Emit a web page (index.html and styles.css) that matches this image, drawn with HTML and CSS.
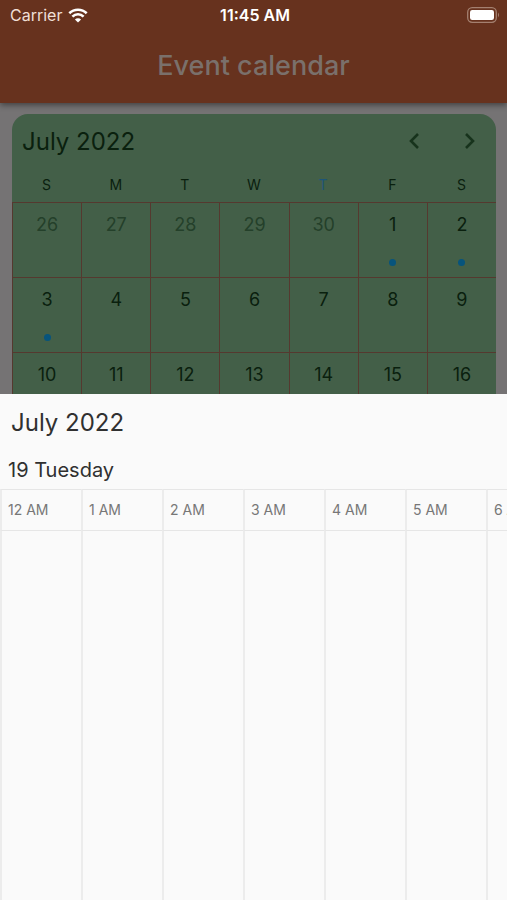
FILE: index.html
```html
<!DOCTYPE html>
<html lang="en">
<head>
<meta charset="utf-8">
<meta name="viewport" content="width=device-width, initial-scale=1">
<title>Event calendar</title>
<link rel="stylesheet" href="styles.css">
</head>
<body>
<div class="screen">
  <div class="backdrop">
    <header class="app-bar">
      <div class="status-bar">
        <div class="carrier">
          <span>Carrier</span>
          <svg class="wifi" viewBox="0 0 20 15" aria-hidden="true">
            <path d="M1.300 5.200A12.600 12.600 0 0 1 18.700 5.200" />
            <path d="M4.400 8.600A8 8 0 0 1 15.600 8.600" />
            <path class="wifi-dot" d="M10 14.600L6.900 11.500A4.400 4.400 0 0 1 13.100 11.500Z" />
          </svg>
        </div>
        <time class="clock">11:45 AM</time>
        <svg class="battery" viewBox="0 0 33 16" aria-hidden="true">
          <rect class="battery-case" x="0.700" y="0.700" width="28.600" height="14.600" rx="4.500" />
          <rect class="battery-level" x="3" y="3" width="24" height="10" rx="2.200" />
          <path class="battery-tip" d="M31 5.600Q33 8 31 10.400Z" />
        </svg>
      </div>
      <h1 class="title">Event calendar</h1>
    </header>
    <main class="month-card">
      <div class="month-head">
        <h2 class="month-name">July 2022</h2>
        <button class="arrow" type="button" aria-label="Previous month">
          <svg viewBox="0 0 24 24" aria-hidden="true"><path d="M15 5L8 12L15 19" /></svg>
        </button>
        <button class="arrow" type="button" aria-label="Next month">
          <svg viewBox="0 0 24 24" aria-hidden="true"><path d="M9 5L16 12L9 19" /></svg>
        </button>
      </div>
      <table class="month">
        <thead>
          <tr><th>S</th><th>M</th><th>T</th><th>W</th><th class="today">T</th><th>F</th><th>S</th></tr>
        </thead>
        <tbody>
          <tr><td class="other">26</td><td class="other">27</td><td class="other">28</td><td class="other">29</td><td class="other">30</td><td class="event">1</td><td class="event">2</td></tr>
          <tr><td class="event">3</td><td>4</td><td>5</td><td>6</td><td>7</td><td>8</td><td>9</td></tr>
          <tr><td>10</td><td>11</td><td>12</td><td>13</td><td>14</td><td>15</td><td>16</td></tr>
        </tbody>
      </table>
    </main>
  </div>
  <section class="sheet">
    <h2 class="sheet-month">July 2022</h2>
    <h3 class="sheet-day">19 Tuesday</h3>
    <div class="timeline">
      <table class="hours">
        <thead>
          <tr><th>12 AM</th><th>1 AM</th><th>2 AM</th><th>3 AM</th><th>4 AM</th><th>5 AM</th><th>6 AM</th></tr>
        </thead>
        <tbody>
          <tr><td></td><td></td><td></td><td></td><td></td><td></td><td></td></tr>
        </tbody>
      </table>
    </div>
  </section>
</div>
</body>
</html>
```
FILE: styles.css
```css
* {
  box-sizing: border-box;
}

body {
  margin: 0;
  font-family: Inter, "Liberation Sans", sans-serif;
  background: #fafafa;
}

h1, h2, h3 {
  margin: 0;
  font-weight: 400;
}

.screen {
  display: grid;
  grid-template-columns: minmax(0, 1fr);
  grid-template-rows: minmax(0, 7fr) minmax(0, 9fr);
  height: 100vh;
  overflow: hidden;
}

.backdrop {
  overflow: hidden;
  background: #757374;
}

.app-bar {
  height: 103px;
  background: #67321e;
  box-shadow: 0 2px 6px rgba(0, 0, 0, 0.45);
}

.status-bar {
  display: grid;
  grid-template-columns: 1fr auto 1fr;
  align-items: center;
  height: 30px;
  padding: 0 7px 0 10px;
  font-size: 16px;
  line-height: 30px;
  color: #f0dfd6;
}

.carrier {
  display: flex;
  align-items: center;
  gap: 6px;
}

.wifi {
  width: 20px;
  height: 15px;
  fill: none;
  stroke: #fff;
  stroke-width: 2.600;
}

.wifi .wifi-dot {
  fill: #fff;
  stroke: none;
}

.clock {
  font-weight: 600;
  color: #fff;
}

.battery {
  justify-self: end;
  width: 33px;
  height: 16px;
}

.battery-case {
  fill: none;
  stroke: #a48070;
  stroke-width: 1.300;
}

.battery-level {
  fill: #fff;
}

.battery-tip {
  fill: #a48070;
}

.title {
  padding-top: 18px;
  font-size: 27px;
  line-height: 36px;
  font-weight: 500;
  text-align: center;
  color: #7a706b;
}

.month-card {
  margin: 11px 11px 0 12px;
  overflow: hidden;
  border-radius: 16px;
  background: #435f48;
  color: #0a200e;
}

.month-head {
  display: flex;
  align-items: center;
  height: 54px;
  padding-left: 10px;
}

.month-name {
  flex: 1;
  font-size: 24px;
}

.arrow {
  display: grid;
  place-items: center;
  width: 54px;
  height: 54px;
  padding: 0;
  border: 0;
  background: none;
}

.arrow svg {
  width: 24px;
  height: 24px;
  fill: none;
  stroke: #17331c;
  stroke-width: 2.600;
}

.month {
  width: 100%;
  table-layout: fixed;
  border-collapse: separate;
  border-spacing: 0;
}

.month th {
  height: 34px;
  padding: 0 0 2px;
  font-size: 14px;
  font-weight: 400;
}

.month .today {
  color: #1d5578;
}

.month td {
  height: 75px;
  padding: 11px 0 0;
  border-top: 1px solid #55392f;
  border-left: 1px solid #55392f;
  font-size: 18px;
  line-height: 22px;
  text-align: center;
  vertical-align: top;
}

.month .other {
  color: #24402a;
}

.event::after {
  content: "";
  display: block;
  width: 7px;
  height: 7px;
  margin: 23px auto 0;
  border-radius: 50%;
  background: #07547c;
}

.sheet {
  display: flex;
  flex-direction: column;
  background: #fafafa;
  color: #303030;
}

.sheet-month {
  padding-left: 11px;
  font-size: 24px;
  line-height: 57px;
}

.sheet-day {
  padding-left: 8px;
  font-size: 20px;
  line-height: 38px;
}

.timeline {
  flex: 1;
  display: grid;
  overflow: hidden;
}

.hours {
  width: 567px;
  height: 100%;
  table-layout: fixed;
  border-collapse: separate;
  border-spacing: 0;
}

.hours th,
.hours td {
  border-top: 1px solid #e6e6e6;
  border-left: 2px solid #ececec;
}

.hours th {
  height: 41px;
  padding: 0 0 0 6px;
  font-size: 14px;
  font-weight: 400;
  text-align: left;
  color: #777;
}
```
